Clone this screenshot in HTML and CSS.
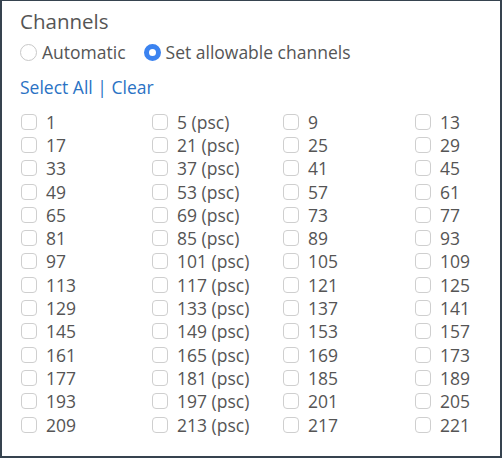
FILE: index.html
```html
<!DOCTYPE html>
<html>
<head>
<meta charset="utf-8">
<link rel="stylesheet" href="styles.css">
</head>
<body>
<div class="panel">
  <div class="title">Channels</div>
  <div class="mode">
    <label class="radio"><span class="dot"></span>Automatic</label>
    <label class="radio"><span class="dot on"></span>Set allowable channels</label>
  </div>
  <div class="links"><a class="link">Select All</a> | <a class="link">Clear</a></div>
  <div class="grid" id="grid"></div>
</div>
<script>
var g=document.getElementById('grid');
for(var r=0;r<14;r++){for(var c=0;c<4;c++){var n=1+r*16+c*4;var t=n+(c==1?' (psc)':'');var d=document.createElement('label');d.className='item';d.innerHTML='<span class="box"></span><span>'+t+'</span>';g.appendChild(d);}}
</script>
</body>
</html>
```
FILE: styles.css
```css
html,body{margin:0;padding:0;}
body{font-family:"Open Sans",sans-serif;color:#555;}
.panel{box-sizing:border-box;width:502px;height:458px;border:2px solid #36434f;border-top-width:1px;background:#fff;padding:7px 0 0 18px;}
.title{font-size:20.5px;line-height:26px;color:#555;}
.mode{display:flex;gap:18px;margin-top:6px;font-size:17.5px;line-height:24px;}
.radio{display:flex;align-items:center;gap:5px;}
.dot{width:17px;height:17px;border:1px solid #c8c8c8;border-radius:50%;box-sizing:border-box;display:inline-block;}
.dot.on{border:5.5px solid #3b83f0;background:#fff;}
.links{margin-top:11px;font-size:17.5px;line-height:24px;color:#2a72c4;}
.link{color:#2a72c4;}
.grid{display:grid;grid-template-columns:131px 131px 132px 100px;margin-top:11px;font-size:17.5px;}
.item{display:flex;align-items:center;gap:9px;height:23.3px;}
.box{width:16px;height:16px;box-sizing:border-box;border:1px solid #cfcfcf;border-radius:4px;margin-left:1px;}
```
